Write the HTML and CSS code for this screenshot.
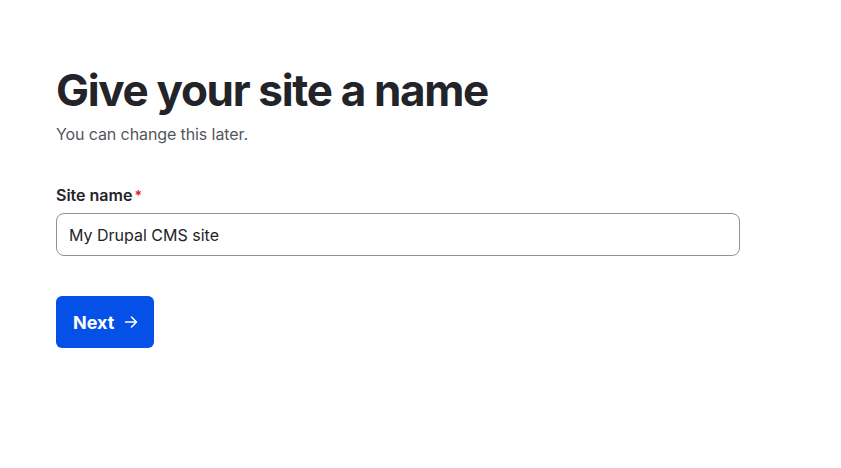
FILE: index.html
```html
<!DOCTYPE html>
<html lang="en">
<head>
<meta charset="utf-8">
<title>Give your site a name</title>
<link rel="stylesheet" href="styles.css">
</head>
<body>
<main class="page">
  <h1 class="title">Give your site a name</h1>
  <p class="subtitle">You can change this later.</p>
  <form class="form">
    <div class="field">
      <label class="label" for="site-name">Site name<span class="required">*</span></label>
      <input class="input" id="site-name" type="text" value="My Drupal CMS site">
    </div>
    <div class="actions">
      <button class="button" type="button">Next
        <svg class="arrow" width="14" height="14" viewBox="0 0 14 14" fill="none" stroke="currentColor" stroke-width="1.6" stroke-linecap="round" stroke-linejoin="round"><path d="M1.5 7h11M7.5 2l5 5-5 5"/></svg>
      </button>
    </div>
  </form>
</main>
</body>
</html>
```
FILE: styles.css
```css
* { box-sizing: border-box; }
html, body { margin: 0; padding: 0; background: #fff; }
body {
  font-family: Inter, "Noto Sans", Arial, sans-serif;
  color: #222330;
}
.page {
  padding: 62px 56px 0;
  width: 740px;
}
.title {
  margin: 0;
  font-size: 44px;
  line-height: 56px;
  font-weight: 700;
  letter-spacing: -0.03em;
  color: #232429;
}
.subtitle {
  margin: 4px 0 0;
  font-size: 16px;
  line-height: 24px;
  letter-spacing: -0.1px;
  color: #55565b;
}
.form { margin-top: 39px; }
.field { display: flex; flex-direction: column; gap: 7px; }
.label {
  font-size: 16px;
  line-height: 20px;
  font-weight: 600;
  color: #232429;
}
.required { color: #d72222; margin-left: 2px; font-size: 14px; }
.input {
  height: 43px;
  width: 684px;
  border: 1px solid #8e929c;
  border-radius: 8px;
  padding: 0 12px;
  font-family: inherit;
  font-size: 16px;
  color: #232429;
  background: #fff;
}
.actions { margin-top: 40px; }
.button {
  display: inline-flex;
  align-items: center;
  gap: 10px;
  height: 52px;
  padding: 0 16px 0 17px;
  border: 0;
  border-radius: 6px;
  background: #0550e6;
  color: #fff;
  font-family: inherit;
  font-size: 18px;
  font-weight: 700;
}
.arrow { display: block; }
```
